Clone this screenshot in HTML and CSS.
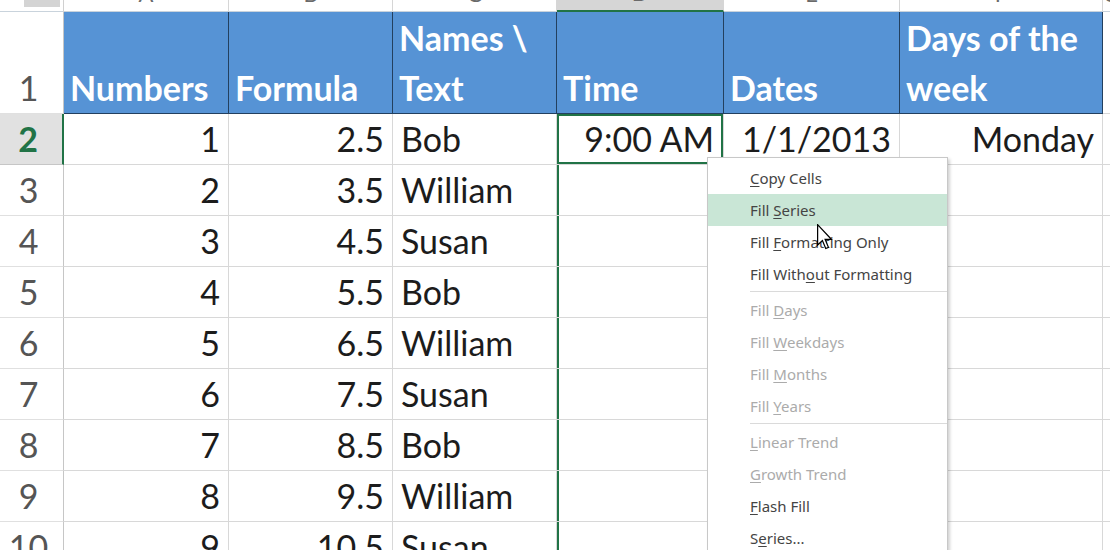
FILE: index.html
```html
<!DOCTYPE html>
<html>
<head>
<meta charset="utf-8">
<link rel="stylesheet" href="styles.css">
</head>
<body>
<div class="sheet">
  <div class="ch corner"><span class="tri"></span></div>
  <div class="ch"><span>A</span></div>
  <div class="ch"><span>B</span></div>
  <div class="ch"><span>C</span></div>
  <div class="ch ch-sel"><span>D</span></div>
  <div class="ch"><span>E</span></div>
  <div class="ch"><span>F</span></div>
  <div class="ch"><span>G</span></div>

  <div class="rh rh-top">1</div>
  <div class="hd">Numbers</div>
  <div class="hd">Formula</div>
  <div class="hd">Names \<br>Text</div>
  <div class="hd">Time</div>
  <div class="hd">Dates</div>
  <div class="hd">Days of the<br>week</div>
  <div class="c"></div>

  <div class="rh rh-sel">2</div>
  <div class="c r">1</div>
  <div class="c r">2.5</div>
  <div class="c">Bob</div>
  <div class="c r active">9:00 AM</div>
  <div class="c r">1/1/2013</div>
  <div class="c r">Monday</div>
  <div class="c"></div>

  <div class="rh">3</div>
  <div class="c r">2</div>
  <div class="c r">3.5</div>
  <div class="c">William</div>
  <div class="c fill"></div>
  <div class="c"></div>
  <div class="c"></div>
  <div class="c"></div>

  <div class="rh">4</div>
  <div class="c r">3</div>
  <div class="c r">4.5</div>
  <div class="c">Susan</div>
  <div class="c fill"></div>
  <div class="c"></div>
  <div class="c"></div>
  <div class="c"></div>

  <div class="rh">5</div>
  <div class="c r">4</div>
  <div class="c r">5.5</div>
  <div class="c">Bob</div>
  <div class="c fill"></div>
  <div class="c"></div>
  <div class="c"></div>
  <div class="c"></div>

  <div class="rh">6</div>
  <div class="c r">5</div>
  <div class="c r">6.5</div>
  <div class="c">William</div>
  <div class="c fill"></div>
  <div class="c"></div>
  <div class="c"></div>
  <div class="c"></div>

  <div class="rh">7</div>
  <div class="c r">6</div>
  <div class="c r">7.5</div>
  <div class="c">Susan</div>
  <div class="c fill"></div>
  <div class="c"></div>
  <div class="c"></div>
  <div class="c"></div>

  <div class="rh">8</div>
  <div class="c r">7</div>
  <div class="c r">8.5</div>
  <div class="c">Bob</div>
  <div class="c fill"></div>
  <div class="c"></div>
  <div class="c"></div>
  <div class="c"></div>

  <div class="rh">9</div>
  <div class="c r">8</div>
  <div class="c r">9.5</div>
  <div class="c">William</div>
  <div class="c fill"></div>
  <div class="c"></div>
  <div class="c"></div>
  <div class="c"></div>

  <div class="rh">10</div>
  <div class="c r">9</div>
  <div class="c r">10.5</div>
  <div class="c">Susan</div>
  <div class="c fill"></div>
  <div class="c"></div>
  <div class="c"></div>
  <div class="c"></div>
</div>

<div class="menu">
  <div class="mi"><u>C</u>opy Cells</div>
  <div class="mi hover">Fill <u>S</u>eries</div>
  <div class="mi">Fill <u>F</u>ormatting Only</div>
  <div class="mi">Fill With<u>o</u>ut Formatting</div>
  <div class="sep"></div>
  <div class="mi dis">Fill <u>D</u>ays</div>
  <div class="mi dis">Fill <u>W</u>eekdays</div>
  <div class="mi dis">Fill <u>M</u>onths</div>
  <div class="mi dis">Fill <u>Y</u>ears</div>
  <div class="sep"></div>
  <div class="mi dis"><u>L</u>inear Trend</div>
  <div class="mi dis"><u>G</u>rowth Trend</div>
  <div class="mi"><u>F</u>lash Fill</div>
  <div class="mi">S<u>e</u>ries...</div>
</div>

<svg class="cursor" width="16" height="26" viewBox="0 0 13 21">
  <path d="M0.5 0.5 L0.5 17 L4.4 13.3 L7.1 19.8 L9.3 18.9 L6.6 12.5 L11.8 12.5 Z" fill="#fff" stroke="#000" stroke-width="1" stroke-linejoin="miter"/>
</svg>
</body>
</html>
```

FILE: styles.css
```css
html, body {
  margin: 0;
  padding: 0;
  background: #ffffff;
  overflow: hidden;
}

body {
  width: 1110px;
  height: 550px;
  position: relative;
  font-family: Lato, "Liberation Sans", sans-serif;
}

.sheet {
  display: grid;
  grid-template-columns: 64px 165px 164px 164px 167px 176px 203px 1fr;
  grid-template-rows: 12px 102px repeat(9, 51px);
  width: 1110px;
}

/* column header strip (mostly scrolled out of view) */
.ch {
  box-sizing: border-box;
  overflow: hidden;
  display: flex;
  justify-content: center;
  align-items: flex-end;
  font-size: 22px;
  color: #6a6a6a;
  background: #ffffff;
  border-right: 1px solid #d6d6d6;
  border-bottom: 1px solid #c9d3dc;
}
.ch span {
  line-height: 22px;
  margin-bottom: 6px;
}
.ch-sel {
  background: #d6d6d6;
  border-bottom: 2px solid #217346;
}
.corner {
  justify-content: flex-start;
  align-items: flex-start;
  border-right: 1px solid #d0d0d0;
}
.corner .tri {
  display: block;
  width: 36px;
  height: 7px;
  margin-left: 24px;
  background: #d4d4d4;
}

/* row headers */
.rh {
  box-sizing: border-box;
  font-size: 34px;
  color: #555555;
  text-align: center;
  line-height: 50px;
  padding-right: 6px;
  border-right: 1px solid #c6c6c6;
  border-bottom: 1px solid #e0e0e0;
  background: #ffffff;
}
.rh-top {
  display: flex;
  align-items: flex-end;
  justify-content: center;
}
.rh-sel {
  background: #e1e1e1;
  color: #217346;
  font-weight: 700;
  border-right: 2px solid #217346;
  border-bottom: 1px solid #c6c6c6;
}

/* table header */
.hd {
  box-sizing: border-box;
  background: #5693d5;
  color: #ffffff;
  font-weight: 700;
  font-size: 34px;
  line-height: 50px;
  padding-left: 6px;
  white-space: nowrap;
  display: flex;
  flex-direction: column;
  justify-content: flex-end;
  border-right: 1px solid #23405f;
  border-bottom: 1px solid #23405f;
}

/* cells */
.c {
  box-sizing: border-box;
  font-size: 34px;
  color: #1c1c1c;
  line-height: 50px;
  padding: 0 8px;
  white-space: nowrap;
  border-right: 1px solid #d8d8d8;
  border-bottom: 1px solid #d8d8d8;
}
.r {
  text-align: right;
}
.active {
  box-shadow: inset 0 0 0 2px #217346;
  padding-right: 9px;
}
.fill {
  box-shadow: inset 2px 0 0 #217346;
}

/* context menu */
.menu {
  position: absolute;
  left: 707px;
  top: 157px;
  width: 241px;
  height: 420px;
  box-sizing: border-box;
  padding-top: 4px;
  background: #ffffff;
  border: 1px solid #c8c8c8;
  box-shadow: 2px 2px 3px rgba(0, 0, 0, 0.18);
  font-family: "Noto Sans", "Open Sans", sans-serif;
  font-size: 15px;
  color: #444444;
}
.mi {
  height: 32px;
  line-height: 32px;
  padding-left: 42px;
  white-space: nowrap;
}
.mi u {
  text-decoration-thickness: 1px;
  text-underline-offset: 2px;
}
.hover {
  background: #c9e6d6;
}
.dis {
  color: #ababab;
}
.sep {
  height: 1px;
  margin: 1px 0 2px 42px;
  background: #dadada;
}

.cursor {
  position: absolute;
  left: 817px;
  top: 224px;
}
```
